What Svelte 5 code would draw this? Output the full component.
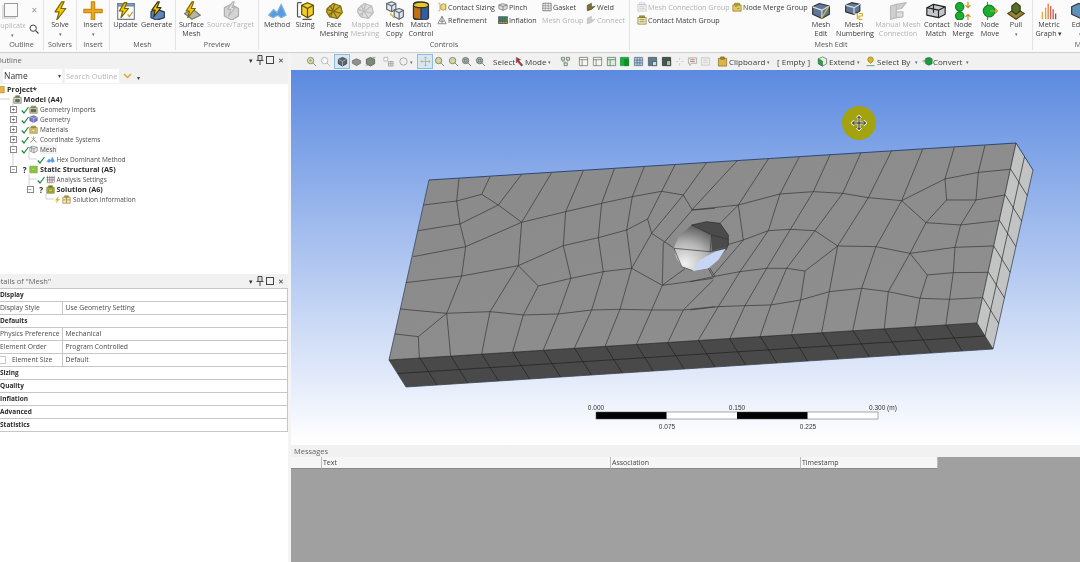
<script>
  const I = {
    bolt: [['M14 1 6 13h5L8 23l11-14h-6l4-8Z', '#f6c800', '#7a6400']],
    plus: [['M10 1h4v9h9v4h-9v9h-4v-9H1v-4h9Z', '#e8a820', '#c98a10']],
    update: [['M2 3h20v19H2Z', '#fdfdf4', '#6f7f97'], ['M2 3h20v3H2Z', '#7f9cc4', '#6f7f97'], ['M10 2 4 12h4l-2 8 9-11h-5l3-7Z', '#f6c800', '#7a6400'], ['M14 16l2 3 4-6', 'none', '#b9a030']],
    generate: [['M13 10l9 3v7l-9 3-7-3v-7Z', '#5f86b8', '#27384f'], ['M14 1 7 11h4l-2 8 9-11h-5l3-7Z', '#f3c400', '#3a3200']],
    surface: [['M3 15l10-5 9 7-10 5Z', '#b7b7a0', '#777'], ['M12 1 5 12h4l-2 8 9-11h-5l3-8Z', '#f6c800', '#7a6400']],
    source: [['M4 8l8-4 9 5v9l-8 5-9-5Z', '#d4d4d4', '#aaa'], ['M14 1 8 10h4l-3 8 8-10h-4l3-7Z', '#e8e8e8', '#b5b5b5']],
    method: [['M2 17l6-7 4 4 5-10 6 13-6 3-4-3-6 3Z', '#5b9bdc', '#7db4ea']],
    sizing: [['M8 5l7-3 7 3v11l-7 4-7-4Z', '#f2cc2c', '#5b4d00'], ['M3 2h5M3 2v17M3 19h4M9 22h11', 'none', '#555'], ['M15 9v11M8 5l7 4 7-4', 'none', '#5b4d00']],
    face: [['M4 9l7-6 9 3 2 8-6 7-9-2-4-6Z', '#c9ac2e', '#7f6b14'], ['M3 10l18 5M7 5l9 16M13 3 8 19M20 6 5 17', 'none', '#7f6b14']],
    mapped: [['M4 9l7-6 9 3 2 8-6 7-9-2-4-6Z', '#ddd', '#bbb'], ['M3 10l18 5M7 5l9 16M13 3 8 19M20 6 5 17', 'none', '#bbb']],
    copy: [['M2 3l6-2 5 2v7l-5 3-6-3Z', '#e4e8ec', '#5c6670'], ['M11 11l6-2 5 2v8l-5 3-6-3Z', '#dfe6ec', '#5c6670'], ['M2 3l6 3 5-3M8 6v7M11 11l6 3 5-3M17 14v8', 'none', '#5c6670'], ['M6 15l5 5', 'none', '#d9a520']],
    match: [['M3 5c0-5 18-5 18 0v15c0 4-18 4-18 0Z', '#2c5fa8', '#333'], ['M3 5c0-5 9-5 9 0v17c-4 0-9-1-9-2Z', '#c07018', '#333'], ['M3 5c0-5 18-5 18 0 0 4-18 4-18 0Z', '#e8c820', '#333']],
    edit: [['M2 7l8-4 12 3v10l-9 5-11-5Z', '#5f7898', '#333'], ['M2 7l11 4 9-5M13 11v10', 'none', '#ddd'], ['M13 20l8-13', 'none', '#e0b830']],
    numbering: [['M2 5l7-3 10 2v8l-7 4-10-3Z', '#5f7898', '#333'], ['M2 5l10 3 7-4M12 8v8', 'none', '#ddd'], ['M13 15h3v7M18 15h4v3h-4v4h4', 'none', '#d9a520']],
    manual: [['M3 6l7-2v16l-7 2ZM10 4l12-2-6 7-6 1Z', '#cfcfcf', '#bbb'], ['M10 13l8 0v6l-8 1Z', '#ddd', '#bbb']],
    cmatch: [['M1 8l8-4 14 3v9l-8 4-14-3Z', '#c4c8cc', '#222'], ['M1 8l14 3 8-4M15 11v9M9 4v10', 'none', '#222']],
    nmerge: [['M3 7a5 5 0 1 1 10 0a5 5 0 1 1-10 0ZM3 18a5 5 0 1 1 10 0a5 5 0 1 1-10 0Z', '#18b030', '#108020'], ['M18 1v7M15 5l3 3 3-3M18 23v-7M15 19l3-3 3 3', 'none', '#c09020']],
    nmove: [['M4 12a7 7 0 1 1 14 0a7 7 0 1 1-14 0Z', '#18b030', '#108020'], ['M12 12h9M18 9l3 3-3 3', 'none', '#d9a520'], ['M9 1v4M9 19v4', 'none', '#18b030']],
    pull: [['M2 15l10-6 10 6-10 7Z', '#9a8438', '#554812'], ['M7 6l5-4 5 4v6l-5 4-5-4Z', '#55702c', '#2f3f14']],
    metric: [['M4 22v-9', 'none', '#e8a020'], ['M8 22V8', 'none', '#e89020'], ['M11 22V3', 'none', '#e07020'], ['M14 22V6', 'none', '#d85040'], ['M17 22v-12', 'none', '#d03838'], ['M20 22v-7', 'none', '#c82828']],
    edgeic: [['M2 7l8-4 12 3v10l-9 5-11-5Z', '#5f92b8', '#333']]
  };
  const S = {
    csize: [['M3 3h4v18H3M21 3v18', 'none', '#b09020'], ['M9 7l7-3 5 3v10l-6 3-6-3Z', '#f2d870', '#8a7420']],
    refine: [['M12 3 2 21h20Z', '#eee', '#555'], ['M7 15h10M12 3v18', 'none', '#555']],
    pinch: [['M2 7l9-3 11 3v9l-10 4-10-4Z', '#ddd', '#555'], ['M2 7l10 4 10-4M12 11v9', 'none', '#555']],
    inflat: [['M1 4h22v16H1Z', '#4f8a58', '#33465c'], ['M1 15h22v5H1Z', '#d8b020', '#33465c'], ['M5 4v16M11 4v16M17 4v16', 'none', '#2c4866']],
    gasket: [['M2 3h20v18H2Z', '#f4f4f4', '#444'], ['M2 9h20M2 15h20M8 3v18M15 3v18', 'none', '#777']],
    weld: [['M3 21V8l10-5v9l9-2-9 8Z', '#7d7038', '#4c4420']],
    weldd: [['M3 21V8l10-5v9l9-2-9 8Z', '#ccc', '#bbb']],
    groupd: [['M2 6h20v16H2Z', '#eee', '#bbb'], ['M6 2h12v4H6ZM6 11h12M6 16h12', 'none', '#bbb']],
    group: [['M2 6h20v16H2Z', '#eee7b8', '#62651e'], ['M6 2h12v4H6Z', '#b8a030', '#62651e'], ['M6 11h12M6 16h12', 'none', '#62651e']],
    groupn: [['M2 7h20v15H2Z', '#e8c860', '#7a6a10'], ['M6 3h12v4H6Z', '#cba820', '#7a6a10'], ['M8 12a2 2 0 1 1 4 0M13 17a2 2 0 1 1 4 0', 'none', '#1a9030']]
  };
  const T = {
    zin: [['M3 10a7 7 0 1 1 14 0a7 7 0 1 1-14 0Z', '#cfe2b8', '#5d6b55'], ['M15 15l7 7', 'none', '#5d6b55'], ['M7 10h6M10 7v6', 'none', '#b09020']],
    zout: [['M3 10a7 7 0 1 1 14 0a7 7 0 1 1-14 0Z', '#fafafa', '#9aa0a0'], ['M15 15l7 7', 'none', '#9aa0a0']],
    iso: [['M3 7l9-4 9 4v10l-9 5-9-5Z', '#5a6570', '#222'], ['M3 7l9 5 9-5M12 12v10', 'none', '#bcc']],
    wedge: [['M3 10l9-4 9 4v6l-9 5-9-5Z', '#8d9094', '#666']],
    dots: [['M3 7l9-4 9 4v10l-9 5-9-5Z', '#7c8a78', '#444'], ['M1 20h6M17 3h6', 'none', '#4a9a50']],
    split: [['M2 3h8v8H2Z', '#fff', '#999'], ['M12 12h10v10H12ZM12 17h10M17 12v10', '#eee', '#888']],
    spin: [['M4 12a8 8 0 1 1 16 0a8 8 0 1 1-16 0Z', 'none', '#808890']],
    pan: [['M12 2v20M2 12h20M9 5l3-3 3 3M9 19l3 3 3-3M5 9l-3 3 3 3M19 9l3 3-3 3', 'none', '#b9a040']],
    zfit: [['M3 10a7 7 0 1 1 14 0a7 7 0 1 1-14 0Z', '#d8d4a0', '#55604c'], ['M15 15l7 7', 'none', '#55604c']],
    zbox: [['M3 10a7 7 0 1 1 14 0a7 7 0 1 1-14 0Z', '#b8c4b8', '#44504c'], ['M15 15l7 7', 'none', '#44504c'], ['M7 7h6v6H7Z', 'none', '#44504c']],
    mode: [['M3 3l9 5-4 2 9 10-3 2-9-10-2 3Z', '#d82020', '#555']],
    net: [['M3 3h7v6H3ZM14 3h7v6h-7ZM9 15h7v6H9Z', '#d8e8d8', '#4a5a50'], ['M6 9v4h7M17 9v4', 'none', '#5a8a50']],
    d1: [['M3 3h18v18H3Z', '#f4f6f2', '#5a6258'], ['M3 8h18M9 8v13', 'none', '#5a6258']],
    d2: [['M3 3h18v18H3Z', '#dcecdc', '#3e6a4a'], ['M3 8h18M9 8v13', 'none', '#3e6a4a']],
    g: [['M3 3h18v18H3Z', '#1ca83a', '#108a28'], ['M12 8h9v13h-9Z', '#0e8e28', '#108a28']],
    b1: [['M3 3h18v18H3Z', '#b8cce0', '#456278'], ['M3 9h18M3 15h18M9 3v18M15 3v18', 'none', '#456278']],
    b2: [['M3 3h18v18H3Z', '#5e7c8c', '#354a58'], ['M12 12h9v9h-9Z', '#c8dce8', '#354a58']],
    b3: [['M3 3h18v18H3Z', '#3e5a50', '#222'], ['M12 10h9v11h-9Z', '#a8c0b0', '#222']],
    star: [['M12 4v5M12 15v6M4 12h5M15 12h6', 'none', '#b9d0a0']],
    note: [['M3 4h18v12H10l-4 5v-5H3Z', '#eee', '#8a9a8a'], ['M7 8h10M7 12h10', 'none', '#c04040']],
    noted: [['M3 4h18v16H3Z', '#eee', '#bbb'], ['M7 9h10M7 14h10', 'none', '#bbb']],
    clip: [['M3 5h18v17H3Z', '#dcb448', '#7a6420'], ['M8 2h8v5H8Z', '#a68a30', '#7a6420']],
    extend: [['M3 6l9-4 9 4v11l-9 5-9-5Z', '#e8f0e4', '#4a5a4c'], ['M3 6l9 5v11l-9-5Z', '#2aa048', '#2a7a40']],
    selby: [['M12 2a6 6 0 0 1 6 6c0 4-6 8-6 8s-6-4-6-8a6 6 0 0 1 6-6Z', '#d8b820', '#8a7410'], ['M3 21h18', 'none', '#208040']],
    conv: [['M8 5l8-2 6 3v11l-7 3-7-3Z', '#1c9a3e', '#127030'], ['M1 11h7M5 8l3 3-3 3', 'none', '#127030']]
  };
  const TR = {
    proj: [['M2 4h20v17H2Z', '#e8b448', '#a07818']],
    model: [['M2 6h20v16H2Z', '#d8d8c0', '#555'], ['M7 2h10v4H7Z', '#7c8a58', '#555'], ['M7 12h10v6H7Z', '#5a7a68', '#333']],
    geoi: [['M2 7h20v15H2Z', '#d8d088', '#665'], ['M6 3h12v4H6Z', '#a89a48', '#665'], ['M6 12h12v6H6Z', '#5a6a80', '#444']],
    geo: [['M2 5l10-3 10 4v9l-10 5-10-5Z', '#7a78c8', '#44507a'], ['M2 5l10 4 10-3M12 9v11', 'none', '#dde']],
    mat: [['M2 7h20v15H2Z', '#e4c868', '#7a6a28'], ['M6 3h12v4H6Z', '#b89a38', '#7a6a28'], ['M8 11h8v7H8Z', '#f6f0c8', '#8a7a38']],
    coord: [['M12 12V3M12 12 3 20M12 12l9 8', 'none', '#d83030'], ['M6 6l12 12M18 6 6 18', 'none', '#3a9a50']],
    mesh: [['M2 6l8-3 12 3v10l-9 5-11-5Z', '#e8e8e8', '#666'], ['M2 6l11 4 9-4M13 10v11M7 4v13', 'none', '#666']],
    hex: [['M2 17l6-7 4 4 5-9 6 12-6 3-4-3-6 3Z', '#5b9bdc', '#7db4ea']],
    stat: [['M2 3h20v18H2Z', '#8cc63e', '#6a9a2c'], ['M6 9h12v4H6Z', '#d8eab0', '#6a9a2c']],
    anal: [['M4 2v18M10 2v18M16 2v18M22 2v18M1 7h22M1 13h22', 'none', '#444'], ['M2 22l3-4 3 4 3-4 3 4 3-4 3 4', 'none', '#d04020']],
    sol: [['M2 6h20v16H2Z', '#a8b848', '#5a6a18'], ['M7 2h10v4H7Z', '#7c8a28', '#5a6a18'], ['M7 11h10v7H7Z', '#e8d048', '#5a6a18']],
    info: [['M2 6h20v16H2Z', '#f4e8b0', '#7a6a28'], ['M7 2h10v4H7Z', '#c8a838', '#7a6a28'], ['M12 6v16M2 13h20', 'none', '#7a6a28']]
  };

  const groups = [
    { label: 'Solvers', w: 33, tools: [{ w: 32, ic: 'bolt', t: ['Solve'], dd: 1 }] },
    { label: 'Insert', w: 33, tools: [{ w: 32, ic: 'plus', t: ['Insert'], dd: 1 }] },
    { label: 'Mesh', w: 66, tools: [{ w: 31, ic: 'update', t: ['Update'] }, { w: 30, ic: 'generate', t: ['Generate'] }] },
    { label: 'Preview', w: 83, tools: [{ w: 31, ic: 'surface', t: ['Surface', 'Mesh'] }, { w: 47, ic: 'source', t: ['Source/Target'], off: 1 }] }
  ];
  const controls = [
    { w: 28, ic: 'method', t: ['Method'] }, { w: 28, ic: 'sizing', t: ['Sizing'] }, { w: 30, ic: 'face', t: ['Face', 'Meshing'] },
    { w: 32, ic: 'mapped', t: ['Mapped', 'Meshing'], off: 1 }, { w: 27, ic: 'copy', t: ['Mesh', 'Copy'] }, { w: 26, ic: 'match', t: ['Match', 'Control'] }
  ];
  const smallCols = [
    { w: 61, rows: [{ ic: 'csize', t: 'Contact Sizing' }, { ic: 'refine', t: 'Refinement' }] },
    { w: 44, rows: [{ ic: 'pinch', t: 'Pinch' }, { ic: 'inflat', t: 'Inflation' }] },
    { w: 44, rows: [{ ic: 'gasket', t: 'Gasket' }, { t: 'Mesh Group', off: 1 }] },
    { w: 43, rows: [{ ic: 'weld', t: 'Weld' }, { ic: 'weldd', t: 'Connect', off: 1 }] }
  ];
  const meshEdit = [
    { w: 30, ic: 'edit', t: ['Mesh', 'Edit'] }, { w: 36, ic: 'numbering', t: ['Mesh', 'Numbering'] },
    { w: 52, ic: 'manual', t: ['Manual Mesh', 'Connection'], off: 1 }, { w: 24, ic: 'cmatch', t: ['Contact', 'Match'] },
    { w: 30, ic: 'nmerge', t: ['Node', 'Merge'] }, { w: 24, ic: 'nmove', t: ['Node', 'Move'] }, { w: 28, ic: 'pull', t: ['Pull'], dd: 1 }
  ];

  const toolbar = [
    { s: 13 }, { ic: 'zin', w: 14 }, { ic: 'zout', w: 14 }, { s: 2 }, { ic: 'iso', w: 16, on: 1 }, { ic: 'wedge', w: 12 }, { ic: 'dots', w: 16 }, { s: 3 },
    { ic: 'split', w: 14 }, { s: 1 }, { ic: 'spin', w: 14 }, { t: '▾', w: 7, dim: 1 }, { ic: 'pan', w: 16, on: 1 }, { ic: 'zfit', w: 13 }, { ic: 'zfit', w: 14 }, { ic: 'zbox', w: 13 }, { ic: 'zbox', w: 14 }, { s: 6 },
    { t: 'Select', w: 22 }, { ic: 'mode', w: 10 }, { t: 'Mode', w: 23 }, { t: '▾', w: 10, dim: 1 }, { ic: 'net', w: 14 }, { s: 4 }, { ic: 'd1', w: 14 }, { ic: 'd1', w: 14 }, { ic: 'd2', w: 14 }, { ic: 'g', w: 13 }, { ic: 'b1', w: 14 }, { ic: 'b2', w: 14 }, { ic: 'b3', w: 14 }, { ic: 'star', w: 13 }, { ic: 'note', w: 13 }, { ic: 'noted', w: 13 }, { s: 3 },
    { ic: 'clip', w: 14 }, { t: 'Clipboard', w: 38 }, { t: '▾', w: 10, dim: 1 }, { t: '[ Empty ]', w: 34 }, { s: 4 }, { ic: 'extend', w: 14 }, { t: 'Extend', w: 28 }, { t: '▾', w: 7, dim: 1 }, { ic: 'selby', w: 13 }, { t: 'Select By', w: 38 }, { t: '▾', w: 6, dim: 1 }, { ic: 'conv', w: 12 }, { t: 'Convert', w: 33 }, { t: '▾', w: 7, dim: 1 }
  ];

  const tree = [
    { l: -1, ic: 'proj', t: 'Project*', b: 1 },
    { l: 0, ic: 'model', t: 'Model (A4)', b: 1 },
    { l: 1, box: '+', st: 'ok', ic: 'geoi', t: 'Geometry Imports' },
    { l: 1, box: '+', st: 'ok', ic: 'geo', t: 'Geometry' },
    { l: 1, box: '+', st: 'ok', ic: 'mat', t: 'Materials' },
    { l: 1, box: '+', st: 'ok', ic: 'coord', t: 'Coordinate Systems' },
    { l: 1, box: '−', st: 'ok', ic: 'mesh', t: 'Mesh', sel: 1 },
    { l: 2, st: 'ok', ic: 'hex', t: 'Hex Dominant Method' },
    { l: 1, box: '−', st: 'q', ic: 'stat', t: 'Static Structural (A5)', b: 1 },
    { l: 2, st: 'ok', ic: 'anal', t: 'Analysis Settings' },
    { l: 2, box: '−', st: 'q', ic: 'sol', t: 'Solution (A6)', b: 1 },
    { l: 3, st: 'bolt', ic: 'info', t: 'Solution Information' }
  ];

  const details = [
    { h: 'Display' }, { k: 'Display Style', v: 'Use Geometry Setting' }, { h: 'Defaults' },
    { k: 'Physics Preference', v: 'Mechanical' }, { k: 'Element Order', v: 'Program Controlled' },
    { k: 'Element Size', v: 'Default', check: 1 }, { h: 'Sizing' }, { h: 'Quality' }, { h: 'Inflation' }, { h: 'Advanced' }, { h: 'Statistics' }
  ];

  const lerp = (a, b, t) => a + (b - a) * t;
  const p = (a, b, t) => [lerp(a[0], b[0], t), lerp(a[1], b[1], t)];
  const FL = [389, 360], FR = [977, 323], BL = [406, 387], BR = [993, 349], RT = [1016, 143], RB = [1033, 170];
  const segs = [];
  for (let i = 1; i < 19; i++) { const a = p(FL, FR, i / 19), b = p(BL, BR, i / 19); segs.push([a, b]); }
  segs.push([p(FL, BL, .5), p(FR, BR, .5)]);
  segs.push([p(RT, RB, .5), p(FR, BR, .5)]);
  for (let i = 1; i < 7; i++) { segs.push([p(RT, FR, i / 7), p(RB, BR, i / 7)]); }
  const segPaths = segs.map(([a, b]) => `M${a[0].toFixed(1)} ${a[1].toFixed(1)}L${b[0].toFixed(1)} ${b[1].toFixed(1)}`).join('');

  const lineA = [
    '115,165 215,153 290,133 340,165 410,217 542,185 650,160 742,140 830,124 895,135 922,180 990,175',
    '222,85 215,153 225,222 242,290 230,378 185,490 197,618',
    '315,80 290,133', '410,73 340,165', '100,242 225,222 340,165', '85,320 242,290 410,217',
    '62,398 230,378 400,347 535,287 640,263 725,240 788,207 830,124', '788,207 800,250',
    '45,477 185,490 315,485 415,495 520,492 620,480 705,478 800,480 895,480 990,470',
    '30,552 100,560 185,490', '100,560 103,625',
    '500,68 410,217 400,347 315,485 290,612', '400,347 460,408 415,495 383,605',
    '595,62 542,185 535,287 558,385 520,492 475,600', '460,408 558,385 655,365 740,355 832,406',
    '688,57 650,160 640,263 655,365 620,480 568,595', '778,50 742,140 725,240 740,355 705,478 660,590',
    '740,355 800,250 865,293', '870,45 830,124', '965,38 895,135 800,250', '922,180 835,280 832,406',
    '832,406 800,480 755,582', '832,406 985,385', '985,390 895,480 850,575'
  ];
  const lineB = [
    '142,62 5,210', '5,210 145,195 270,162 370,155 458,160 535,173 635,182 765,117 865,97 960,88',
    '235,57 145,195 90,250', '327,52 270,162 235,272 150,395 85,500 25,600', '420,45 370,155 300,270 230,385 165,497 120,595',
    '513,38 458,160 375,272 290,385 243,495 210,590', '605,32 535,173 443,318 418,455 395,578', '698,28 635,182 558,320 515,445 488,573',
    '793,22 765,117 770,180 708,248 660,340 712,405 690,475 675,558', '885,16 865,97 858,180 812,255 795,322 790,398 768,553',
    '635,182 708,248', '770,180 858,180 945,165', '708,248 812,255 925,242', '660,340 795,322 910,318', '712,405 790,398 893,397', '690,475 780,478 875,473',
    '558,320 660,340', '443,318 558,320', '375,272 443,318', '345,393 443,318', '345,393 332,480 305,580',
    '0,425 70,410 150,395 230,385 290,385 345,393', '0,510 85,500 165,497 243,495 332,480 418,455 515,445 595,455 690,475',
    '595,455 583,565', '660,340 595,455', '235,272 300,268 375,272', '110,315 160,300 235,272', '145,195 160,300', '160,300 70,405', '60,385 75,410'
  ];
  const scaleSegs = [[596, '#000'], [667, '#fff'], [737, '#000'], [808, '#fff']];
</script>

{#snippet glyph(set, name, size)}
  <svg class="glyph" width={size} height={size} viewBox="0 0 24 24" aria-hidden="true">
    {#each set[name] as s}<path d={s[0]} fill={s[1]} stroke={s[2]} stroke-width="1.4" stroke-linejoin="round" />{/each}
  </svg>
{/snippet}

{#snippet tool(x)}
  <div class="tool" class:off={x.off} style="width:{x.w}px">
    <div class="ticon">{@render glyph(I, x.ic, 20)}</div>
    {#each x.t as line}<div class="tline">{line}</div>{/each}
    {#if x.dd}<div class="tdd">▾</div>{/if}
  </div>
{/snippet}

{#snippet panelHead(title, shift)}
  <div class="phead">
    <span class="ptitle" style="margin-left:{shift}px">{title}</span>
    <span class="grip"></span>
    <span class="pbtn">▾</span>
    <svg class="pin" width="8" height="10" viewBox="0 0 8 10"><path d="M2 .5h4v5H2ZM.5 5.500h7M4 5.500V10" fill="#ddd" stroke="#444" /></svg>
    <span class="psq"></span>
    <span class="pbtn px">✕</span>
  </div>
{/snippet}

<div class="app">
  <header class="ribbon">
    <section class="group first">
      <div class="tools dup">
        <div class="dupcol">
          <div class="dupicon"></div>
          <div class="tline off">Duplicate</div>
          <div class="tdd">▾</div>
        </div>
        <div class="dupside">
          <span class="xmark">✕</span>
          <svg width="10" height="10" viewBox="0 0 12 12"><circle cx="5" cy="5" r="3.800" fill="none" stroke="#444" stroke-width="1.200" /><path d="M8 8l3.400 3.400" stroke="#444" stroke-width="1.400" /></svg>
        </div>
      </div>
      <div class="glabel">Outline</div>
    </section>
    {#each groups as g}
      <section class="group" style="width:{g.w}px">
        <div class="tools">{#each g.tools as x}{@render tool(x)}{/each}</div>
        <div class="glabel">{g.label}</div>
      </section>
    {/each}
    <section class="group" style="width:371px">
      <div class="tools lead">
        {#each controls as x}{@render tool(x)}{/each}
        <div class="smalls">
          {#each smallCols as c}
            <div class="scol" style="width:{c.w}px">
              {#each c.rows as r}
                <div class="srow" class:off={r.off}>{#if r.ic}{@render glyph(S, r.ic, 10)}{/if}<span>{r.t}</span></div>
              {/each}
            </div>
          {/each}
        </div>
      </div>
      <div class="glabel">Controls</div>
    </section>
    <section class="group" style="width:403px">
      <div class="tools lead2">
        <div class="scol wide">
          <div class="srow off">{@render glyph(S, 'groupd', 10)}<span>Mesh Connection Group</span></div>
          <div class="srow">{@render glyph(S, 'group', 10)}<span>Contact Match Group</span></div>
        </div>
        <div class="scol nodeg">
          <div class="srow">{@render glyph(S, 'groupn', 10)}<span>Node Merge Group</span></div>
        </div>
        {#each meshEdit as x}{@render tool(x)}{/each}
      </div>
      <div class="glabel">Mesh Edit</div>
    </section>
    <section class="group last">
      <div class="tools">
        <div class="tool" style="width:32px">
          <div class="ticon">{@render glyph(I, 'metric', 20)}</div>
          <div class="tline">Metric</div><div class="tline">Graph ▾</div>
        </div>
        <div class="tool" style="width:30px">
          <div class="ticon">{@render glyph(I, 'edgeic', 20)}</div>
          <div class="tline">Edge</div><div class="tdd">▾</div>
        </div>
      </div>
      <div class="glabel">M</div>
    </section>
  </header>

  <div class="body">
    <aside class="left">
      {@render panelHead('Outline', -4)}
      <div class="search">
        <div class="namebox"><span>Name</span><span class="caret">▾</span></div>
        <div class="searchbox">Search Outline</div>
        <svg class="chev" width="9" height="6" viewBox="0 0 9 6"><path d="M1 1l3.500 3.500L8 1" fill="none" stroke="#d9a830" stroke-width="1.500" /></svg>
        <span class="caret down">▾</span>
      </div>
      <div class="tree">
        <svg class="links" width="80" height="126" viewBox="0 0 80 126" aria-hidden="true">
          <path d="M0 15H10M13 15V85M29 67V75H37M29 90V95H37M29 95V102M46 110V115H54" fill="none" stroke="#c0c0c0" stroke-width=".7" />
        </svg>
        {#each tree as r}
          <div class="trow" style="margin-left:{r.l * 16.5 - 6.5}px">
            <span class="tbox">{#if r.box}<i>{r.box}</i>{/if}</span>
            <span class="tstat">{#if r.st === 'ok'}<svg width="8" height="8" viewBox="0 0 8 8"><path d="M.8 4.500 3 7 7.500 1" fill="none" stroke="#1a8a3a" stroke-width="1.200" /></svg>{:else if r.st === 'q'}?{:else if r.st === 'bolt'}<svg width="7" height="8" viewBox="0 0 7 8"><path d="M4.500 0 1 4.500h2L1.500 8 6 3H4Z" fill="#e0b820" /></svg>{/if}</span>
            {@render glyph(TR, r.ic, 9)}
            <span class="ttext" class:b={r.b} class:sel={r.sel}>{r.t}</span>
          </div>
        {/each}
      </div>
      <div class="split"></div>
      {@render panelHead('Details of "Mesh"', -9)}
      <div class="dtable">
        {#each details as d}
          {#if d.h}
            <div class="drow dh">{d.h}</div>
          {:else}
            <div class="drow">
              <div class="dk" class:chk={d.check}>{#if d.check}<i class="cbox"></i>{/if}{d.k}</div>
              <div class="dv">{d.v}</div>
            </div>
          {/if}
        {/each}
      </div>
    </aside>

    <main class="right">
      <div class="toolbar">
        {#each toolbar as it}
          {#if it.s}
            <span style="width:{it.s}px"></span>
          {:else if it.ic}
            <span class="tb" class:on={it.on} style="width:{it.w}px">{@render glyph(T, it.ic, 11)}</span>
          {:else}
            <span class="tb txt" class:dim={it.dim} style="width:{it.w}px">{it.t}</span>
          {/if}
        {/each}
      </div>
      <div class="view">
        <svg class="scene" width="789" height="373" viewBox="291 70 789 373">
          <defs>
            <linearGradient id="topf" x1="0" y1="0" x2="1" y2="1"><stop offset="0" stop-color="#8a8a8a" /><stop offset="1" stop-color="#8f8f8f" /></linearGradient>
            <radialGradient id="bore" cx=".2" cy=".85" r=".85"><stop offset="0" stop-color="#f2f2f2" /><stop offset=".5" stop-color="#b5b5b5" /><stop offset="1" stop-color="#4c4c4c" /></radialGradient>
          </defs>
          <polygon points="429,180 1016,143 977,323 389,360" fill="url(#topf)" />
          <polygon points="389,360 977,323 993,349 406,387" fill="#494949" />
          <polygon points="1016,143 1033,170 993,349 977,323" fill="#c2c4c4" />
          <path d="M429 180 1016 143 1033 170" fill="none" stroke="#23406e" stroke-width=".9" />
          <path d="M429 180 389 360 406 387 993 349 1033 170" fill="none" stroke="#3c4656" stroke-width=".8" />
          <path d="M389 360 977 323 1016 143M977 323l16 26" fill="none" stroke="#222" stroke-width=".7" />
          <path d={segPaths} fill="none" stroke="#1e1e1e" stroke-width=".65" />
          <g transform="translate(385 150) scale(.3333)" fill="none" stroke="#2e2e2e" stroke-width="1.900">
            {#each lineA as pts}<polyline points={pts} />{/each}
          </g>
          <g transform="translate(690 140) scale(.3333)" fill="none" stroke="#2e2e2e" stroke-width="1.900">
            {#each lineB as pts}<polyline points={pts} />{/each}
          </g>
          <g transform="translate(600 170) scale(.3333)">
            <polygon points="222,235 235,200 275,165 320,155 360,160 385,195 385,225 378,240 355,270 325,295 280,303 245,290 228,260" fill="url(#bore)" />
            <polygon points="275,165 320,155 360,160 385,195 385,228 335,243 335,195" fill="#4b4b4b" />
            <polygon points="378,235 345,245 300,270 278,302 325,295 355,270" fill="#c8d6f6" />
            <g fill="none" stroke="#2e2e2e" stroke-width="1.900">
              <polyline points="222,235 330,245 378,235" />
              <polyline points="275,165 335,195 385,208" />
              <polyline points="335,195 330,245" />
              <polyline points="222,235 245,290 278,302" />
              <polyline points="188,345 255,296" />
              <polyline points="325,295 340,322" />
              <polyline points="275,165 320,155 360,160 385,195 385,225 378,240" />
            </g>
          </g>
          {#each scaleSegs as [x, c]}<rect x={x} y="412" width="70.500" height="7" fill={c} />{/each}
          <rect x="596" y="412" width="282" height="7" fill="none" stroke="#555" stroke-width=".5" />
          <g class="stxt">
            <text x="596" y="409.500" text-anchor="middle">0.000</text>
            <text x="737" y="409.500" text-anchor="middle">0.150</text>
            <text x="869" y="409.500">0.300 (m)</text>
            <text x="667" y="428.500" text-anchor="middle">0.075</text>
            <text x="808" y="428.500" text-anchor="middle">0.225</text>
          </g>
          <circle cx="859" cy="123" r="17" fill="#a3a30f" />
          <path d="M859 116.500v13M852.500 123h13M857 118.500l2-2 2 2M857 127.500l2 2 2-2M854.500 121l-2 2 2 2M863.500 121l2 2-2 2" fill="none" stroke="#fff" stroke-width="2.600" />
          <path d="M859 116.500v13M852.500 123h13M857 118.500l2-2 2 2M857 127.500l2 2 2-2M854.500 121l-2 2 2 2M863.500 121l2 2-2 2" fill="none" stroke="#111" stroke-width="1" />
        </svg>
      </div>
      <div class="msgs">
        <div class="mhead"><span>Messages</span><span class="grip"></span></div>
        <div class="mcols">
          <span class="c0"></span><span class="c1">Text</span><span class="c2">Association</span><span class="c3">Timestamp</span>
        </div>
      </div>
    </main>
  </div>
</div>

<style>
  :global(body) { margin: 0; background: #fff; }
  .app {
    width: 1080px; height: 562px; overflow: hidden; background: #fff;
    display: flex; flex-direction: column;
    font-family: "Open Sans", "Liberation Sans", sans-serif; color: #3c3c3c;
    filter: blur(.25px);
  }
  .glyph { display: block; flex: none; }
  .ribbon { height: 53px; flex: none; display: flex; background: #fbfbfb; border-bottom: 1px solid #cfcfcf; box-sizing: border-box; overflow: hidden; }
  .group { flex: none; height: 50px; display: flex; flex-direction: column; border-right: 1px solid #e3e3e3; box-sizing: border-box; }
  .group.first { width: 44px; }
  .group.last { border-right: 0; width: 90px; }
  .tools { flex: 1; display: flex; min-height: 0; }
  .tools.lead { padding-left: 4px; }
  .tools.lead2 { padding-left: 7px; }
  .glabel { height: 10px; line-height: 9px; font-size: 7.200px; text-align: center; color: #555; white-space: nowrap; }
  .tool { flex: none; text-align: center; font-size: 7.200px; color: #3c3c3c; white-space: nowrap; }
  .tool.off, .srow.off, .tline.off { color: #b4b4b4; }
  .ticon { height: 20px; box-sizing: border-box; padding-top: 1px; display: flex; justify-content: center; overflow: hidden; }
  .tline { height: 8.500px; line-height: 8.500px; }
  .tdd { height: 8px; line-height: 8px; font-size: 5px; color: #666; margin-top: 1px; }
  .dup { overflow: hidden; }
  .dupcol { width: 25px; flex: none; overflow: hidden; font-size: 7.200px; white-space: nowrap; }
  .dupcol .tline { margin-left: -5px; }
  .dupcol .tdd { text-align: center; }
  .dupicon { width: 12px; height: 12px; margin: 3px 0 4px 4px; border: 1.500px solid #9b9b9b; box-shadow: -2px 2px 0 #dedede; background: #fafafa; }
  .dupside { width: 18px; display: flex; flex-direction: column; align-items: center; gap: 9px; padding-top: 5px; }
  .xmark { font-size: 8px; line-height: 10px; color: #999; }
  .smalls { display: flex; padding-left: 3px; }
  .scol { flex: none; display: flex; flex-direction: column; gap: 3px; padding-top: 2px; }
  .scol.wide { width: 95px; }
  .scol.nodeg { width: 74px; }
  .srow { height: 10px; display: flex; align-items: center; gap: 1px; font-size: 7.200px; white-space: nowrap; color: #3c3c3c; }

  .body { flex: 1; display: flex; min-height: 0; }
  .left { width: 288px; flex: none; display: flex; flex-direction: column; overflow: hidden; }
  .phead { height: 14px; flex: none; display: flex; align-items: center; background: #f1f1f1; font-size: 7.500px; color: #666; overflow: hidden; padding-right: 3px; box-sizing: border-box; }
  .ptitle { white-space: nowrap; flex: none; }
  .grip { flex: 1; height: 5px; margin: 0 4px; background-image: radial-gradient(#c4c4c4 .6px, transparent .7px); background-size: 2px 2px; }
  .pbtn { width: 9px; text-align: center; font-size: 7px; color: #333; flex: none; }
  .px { margin-left: 2px; }
  .pin { flex: none; margin: 0 1px; }
  .psq { width: 6px; height: 6px; border: 1px solid #444; flex: none; margin-left: 1px; }
  .search { height: 17px; flex: none; display: flex; align-items: center; background: #f1f1f1; font-size: 7.500px; padding-left: 3px; box-sizing: border-box; }
  .namebox { width: 59px; height: 14px; background: #fff; box-sizing: border-box; display: flex; justify-content: space-between; align-items: center; padding: 0 1px; color: #333; font-size: 8.500px; }
  .searchbox { width: 54px; height: 14px; line-height: 14px; margin-left: 3px; background: #fff; color: #b5b5b5; overflow: hidden; white-space: nowrap; padding-left: 1px; box-sizing: border-box; }
  .caret { font-size: 6px; color: #444; }
  .chev { margin-left: 4px; flex: none; }
  .down { margin: 5px 0 0 5px; }
  .tree { height: 189px; flex: none; background: #fff; position: relative; overflow: hidden; font-size: 6.500px; }
  .links { position: absolute; left: 0; top: 0; }
  .trow { height: 10px; display: flex; align-items: center; white-space: nowrap; color: #4c4c4c; position: relative; }
  .tbox { width: 7px; flex: none; }
  .tbox i { display: block; width: 5px; height: 5px; border: 1px solid #8a8a8a; background: #fff; font: 6px/5px "Liberation Sans", sans-serif; text-align: center; color: #222; }
  .tstat { width: 8.500px; margin-left: 3.500px; flex: none; display: flex; align-items: flex-end; justify-content: center; font-weight: 700; color: #222; font-size: 8px; line-height: 8px; height: 9px; }
  .ttext { margin-left: 2px; }
  .ttext.b { font-weight: 700; color: #2c2c2c; font-size: 7.300px; }
  .ttext.sel { background: #f2f2f2; }
  .split { height: 1px; flex: none; background: #fff; }
  .dtable { border-top: 1px solid #c6c6c6; border-right: 1px solid #c6c6c6; font-size: 6.800px; flex: none; }
  .drow { height: 13px; box-sizing: border-box; border-bottom: 1px solid #c6c6c6; display: flex; line-height: 12px; white-space: nowrap; color: #4a4a4a; }
  .dh { font-weight: 700; color: #2c2c2c; font-size: 6.500px; }
  .dk { width: 63px; flex: none; border-right: 1px solid #c6c6c6; box-sizing: border-box; overflow: hidden; display: flex; align-items: center; }
  .dk.chk { gap: 6px; }
  .cbox { width: 5px; height: 6px; border: 1px solid #c6c6c6; border-left: 0; display: block; flex: none; }
  .dv { padding-left: 2.500px; }

  .right { flex: 1; min-width: 0; display: flex; flex-direction: column; border-left: 3px solid #f4f4f4; box-sizing: border-box; }
  .toolbar { height: 17px; flex: none; display: flex; align-items: center; background: #f1f1f1; font-size: 8px; color: #3c3c3c; white-space: nowrap; overflow: hidden; }
  .toolbar > span { flex: none; }
  .tb { height: 15px; display: flex; align-items: center; justify-content: center; box-sizing: border-box; }
  .tb.on { background: #d6e8f6; border: 1px solid #8cbce0; }
  .tb.txt { justify-content: flex-start; }
  .tb.dim { font-size: 5px; color: #666; }
  .view { height: 373px; flex: none; background: linear-gradient(#5c8ae0, #ffffff); }
  .scene { display: block; }
  .stxt { font: 6.500px "Liberation Sans", sans-serif; fill: #333; }
  .msgs { flex: 1; display: flex; flex-direction: column; margin-top: 2px; background: #a0a0a0; }
  .mhead { height: 12px; flex: none; display: flex; align-items: center; background: #f1f1f1; font-size: 7.500px; color: #666; padding-left: 3px; }
  .mcols { height: 12px; flex: none; display: flex; font-size: 7px; color: #444; line-height: 12px; }
  .mcols span { background: #f6f6f6; box-sizing: border-box; padding-left: 1px; border-right: 1px solid #bbb; border-bottom: 1px solid #8a8a8a; }
  .c0 { width: 31px; }
  .c1 { width: 289px; }
  .c2 { width: 190px; }
  .c3 { width: 137px; }
</style>
